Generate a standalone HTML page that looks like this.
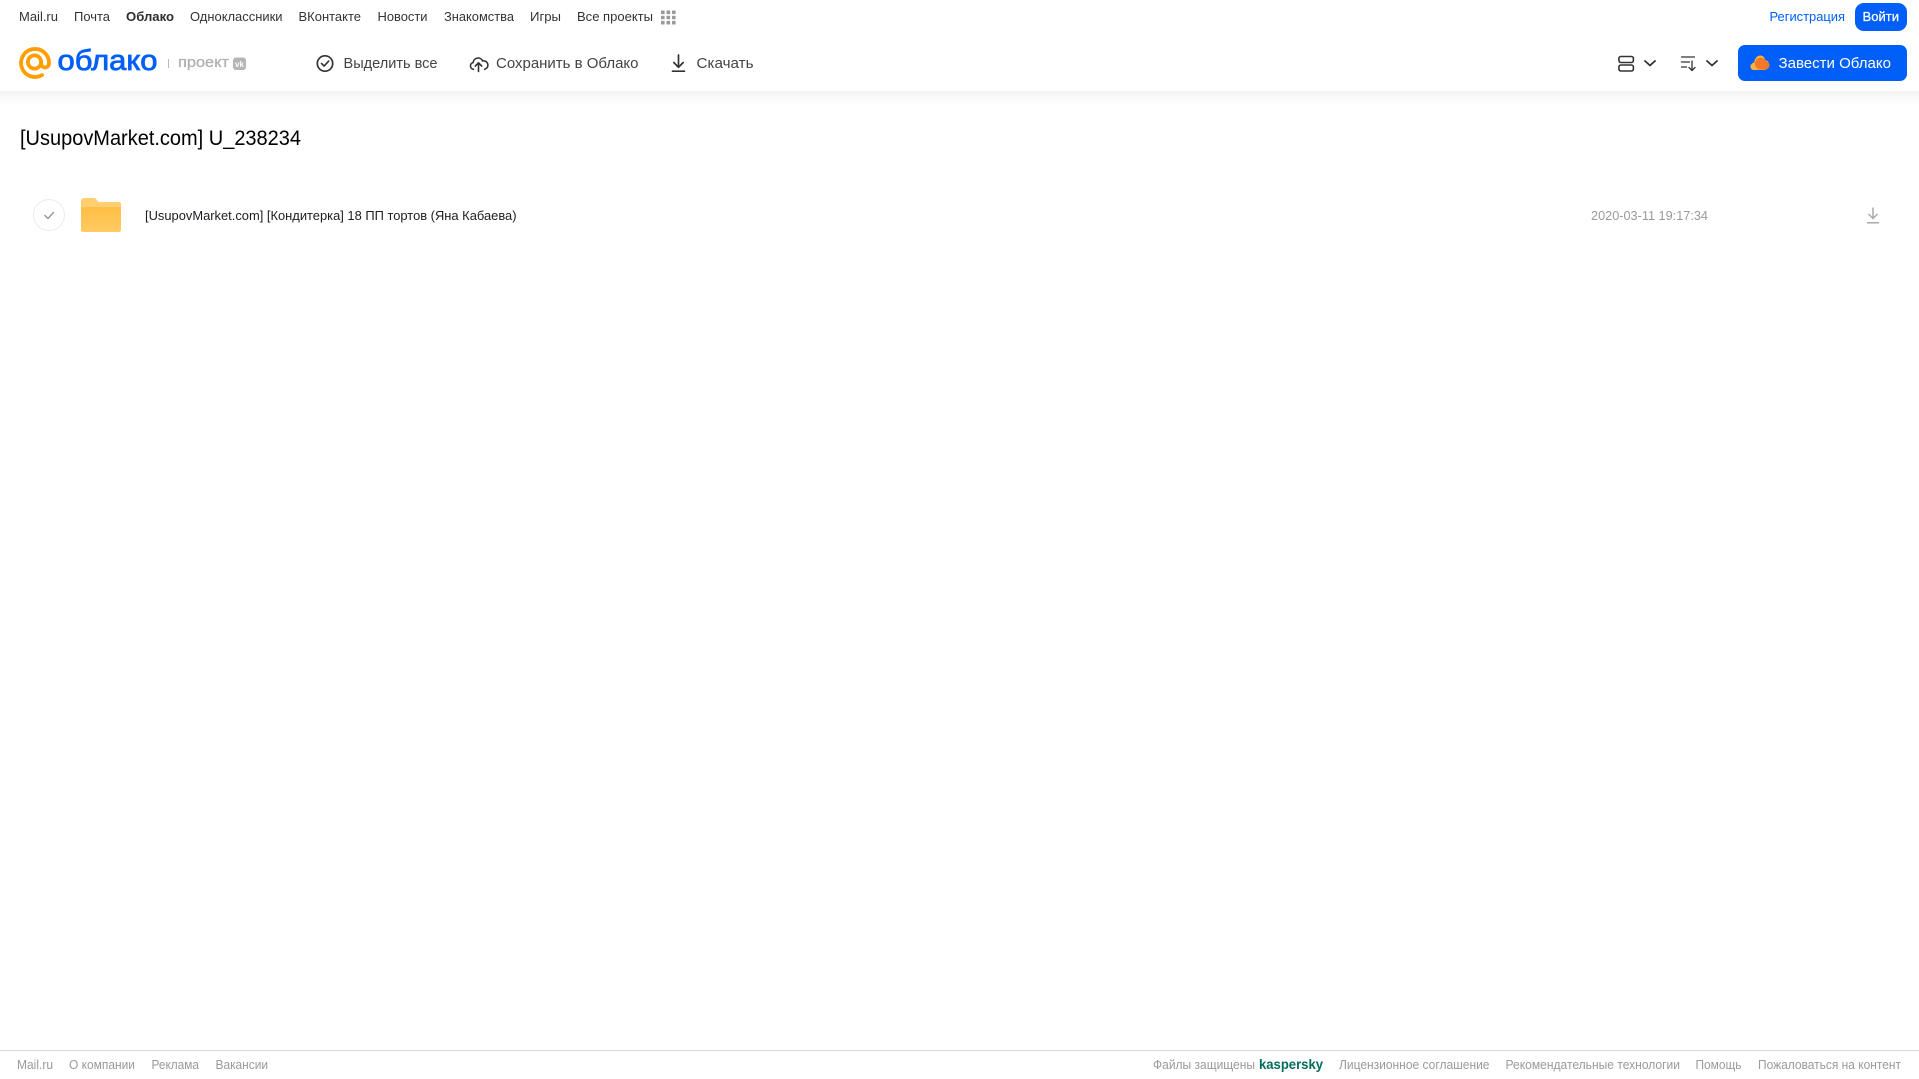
<!DOCTYPE html>
<html lang="ru">
<head>
<meta charset="utf-8">
<title>Облако</title>
<style>
html,body{margin:0;padding:0;background:#fff;width:1919px;height:1079px;overflow:hidden}
svg{display:block}
text{font-family:"Liberation Sans",sans-serif;white-space:pre}
.n{font-size:13px;fill:#333}
.h{font-size:15px;fill:#444}
.f{font-size:12.5px;fill:#9a9a9a}
</style>
</head>
<body>
<svg xmlns="http://www.w3.org/2000/svg" width="1919" height="1079" viewBox="0 0 1919 1079">
<defs>
<linearGradient id="sh" x1="0" y1="0" x2="0" y2="1"><stop offset="0" stop-color="#f4f4f4"/><stop offset="1" stop-color="#fff"/></linearGradient>
<linearGradient id="fo" x1="0" y1="0" x2="0" y2="1"><stop offset="0" stop-color="#ffbe45"/><stop offset="1" stop-color="#ffcb63"/></linearGradient>
</defs>
<rect x="0" y="91" width="1919" height="15" fill="url(#sh)"/>

<!-- top nav -->
<text class="n" x="19" y="21" textLength="39" lengthAdjust="spacingAndGlyphs">Mail.ru</text>
<text class="n" x="74" y="21" textLength="36" lengthAdjust="spacingAndGlyphs">Почта</text>
<text class="n" x="126" y="21" textLength="48" lengthAdjust="spacingAndGlyphs" font-weight="700" style="fill:#2c2d2e">Облако</text>
<text class="n" x="190" y="21" textLength="92.500" lengthAdjust="spacingAndGlyphs">Одноклассники</text>
<text class="n" x="298.500" y="21" textLength="62.500" lengthAdjust="spacingAndGlyphs">ВКонтакте</text>
<text class="n" x="377.500" y="21" textLength="50" lengthAdjust="spacingAndGlyphs">Новости</text>
<text class="n" x="444" y="21" textLength="70" lengthAdjust="spacingAndGlyphs">Знакомства</text>
<text class="n" x="530" y="21" textLength="31" lengthAdjust="spacingAndGlyphs">Игры</text>
<text class="n" x="577" y="21" textLength="76" lengthAdjust="spacingAndGlyphs">Все проекты</text>
<g fill="#999">
<rect x="661" y="10.500" width="3.6" height="3.6" rx=".6"/><rect x="666.5" y="10.500" width="3.6" height="3.6" rx=".6"/><rect x="672" y="10.500" width="3.6" height="3.6" rx=".6"/>
<rect x="661" y="15.700" width="3.6" height="3.6" rx=".6"/><rect x="666.5" y="15.700" width="3.6" height="3.6" rx=".6"/><rect x="672" y="15.700" width="3.6" height="3.6" rx=".6"/>
<rect x="661" y="20.900" width="3.6" height="3.6" rx=".6"/><rect x="666.5" y="20.900" width="3.6" height="3.6" rx=".6"/><rect x="672" y="20.900" width="3.6" height="3.6" rx=".6"/>
</g>
<text class="n" x="1769.500" y="21" textLength="75.500" lengthAdjust="spacingAndGlyphs" style="fill:#005ff9">Регистрация</text>
<rect x="1855" y="3" width="52" height="28" rx="9" fill="#005ff9"/>
<text class="n" x="1862.500" y="21" textLength="36.500" lengthAdjust="spacingAndGlyphs" style="fill:#fff;stroke:#fff;stroke-width:.25">Войти</text>

<!-- logo -->
<g fill="none" stroke="#ff9e00" stroke-width="3.8" stroke-linecap="round">
<path d="M42 75.100A14 14 0 1 1 49 62v1.500a4 4 0 0 1-8 0v-1.500"/>
<circle cx="34.500" cy="62" r="6.6"/>
</g>
<text x="57.500" y="70" font-size="29" fill="#005ff9" stroke="#005ff9" stroke-width=".8" textLength="100" lengthAdjust="spacingAndGlyphs">облако</text>
<rect x="168" y="59" width="1" height="9" fill="#bbb"/>
<text x="178" y="67" font-size="15" fill="#b0b0b0" stroke="#b0b0b0" stroke-width=".3" textLength="51" lengthAdjust="spacingAndGlyphs">проект</text>
<rect x="233" y="57.500" width="13" height="12.500" rx="3" fill="#b5b5b5"/>
<text x="235" y="67" font-size="8" font-weight="700" fill="#fff" textLength="9" lengthAdjust="spacingAndGlyphs">vk</text>

<!-- toolbar -->
<circle cx="325" cy="63.500" r="7.700" fill="none" stroke="#333" stroke-width="1.700"/>
<path d="M321.500 63.500l2.600 2.600 4.600-5" fill="none" stroke="#333" stroke-width="1.600" stroke-linecap="round" stroke-linejoin="round"/>
<text class="h" x="343.500" y="68" textLength="94" lengthAdjust="spacingAndGlyphs">Выделить все</text>

<path d="M473.500 69.300a3.400 3.400 0 0 1-.4-6.700 5 5 0 0 1 9.500-1.700 4.300 4.300 0 0 1 2 8.400" fill="none" stroke="#333" stroke-width="1.600" stroke-linecap="round" stroke-linejoin="round"/>
<path d="M478.500 71.500v-8.500M475.300 66l3.200-3.200 3.200 3.200" fill="none" stroke="#333" stroke-width="1.600" stroke-linecap="round" stroke-linejoin="round"/>
<text class="h" x="496" y="68" textLength="142.500" lengthAdjust="spacingAndGlyphs">Сохранить в Облако</text>

<path d="M678.500 55v12M673.800 62.500l4.700 4.800 4.700-4.800M672.500 71.200h12" fill="none" stroke="#333" stroke-width="1.700" stroke-linecap="round" stroke-linejoin="round"/>
<text class="h" x="696.500" y="68" textLength="57" lengthAdjust="spacingAndGlyphs">Скачать</text>

<!-- view / sort -->
<g fill="none" stroke="#333" stroke-width="1.600">
<rect x="1618.900" y="56.500" width="14.500" height="6" rx="2"/>
<rect x="1618.900" y="65" width="14.500" height="6" rx="2"/>
</g>
<path d="M1645 61l5 4.500 5-4.500M1707 61l5 4.500 5-4.500" fill="none" stroke="#333" stroke-width="1.800" stroke-linecap="round" stroke-linejoin="round"/>
<path d="M1681.500 57h13M1681.500 62h8M1681.500 67h5M1692 61v9.500M1689 67.500l3 3 3-3" fill="none" stroke="#333" stroke-width="1.300" stroke-linecap="round" stroke-linejoin="round"/>

<!-- CTA -->
<rect x="1738" y="45" width="169" height="36" rx="7" fill="#005ff9"/>
<path d="M1754 70a3.500 3.500 0 0 1-2.500-6c.8-1 1.800-1.300 2.700-1.500.5-4 3-7 6-7 2.700 0 4.500 1.800 5 4.500 2.200.5 4 2.300 4 5a5 5 0 0 1-5 5z" fill="#ffb13d"/>
<path d="M1759.500 69.500a6 6 0 0 1-.5-11.500c3.500-.8 6.500 1 6.800 3 2 .7 3.700 2.300 3.700 4.300a4.500 4.500 0 0 1-4.500 4.200z" fill="#f5772a"/>
<text x="1778.500" y="68" font-size="15" fill="#fff" textLength="112.500" lengthAdjust="spacingAndGlyphs">Завести Облако</text>

<!-- title -->
<text x="20" y="145" font-size="21" fill="#000" textLength="281" lengthAdjust="spacingAndGlyphs">[UsupovMarket.com] U_238234</text>

<!-- row -->
<circle cx="49" cy="215" r="15.500" fill="#fff" stroke="#ececec" stroke-width="1"/>
<path d="M45 215.500l3 3 5.500-6" fill="none" stroke="#999" stroke-width="1.500" stroke-linecap="round" stroke-linejoin="round"/>
<path d="M81 201a3 3 0 0 1 3-3h9.500c1.500 0 2.400.6 3.200 1.700l1.600 2.300H119a2 2 0 0 1 2 2V229.500a2.500 2.500 0 0 1-2.500 2.500H83.500a2.500 2.500 0 0 1-2.500-2.500z" fill="#ffcf70"/>
<path d="M81 207h40v22.500a2.500 2.500 0 0 1-2.500 2.500H83.500a2.500 2.500 0 0 1-2.500-2.500z" fill="url(#fo)"/>
<text x="145" y="220" font-size="13" fill="#1f1a22" textLength="371.500" lengthAdjust="spacingAndGlyphs">[UsupovMarket.com] [Кондитерка] 18 ПП тортов (Яна Кабаева)</text>
<text x="1591" y="220" font-size="13" fill="#9a9a9a" textLength="117" lengthAdjust="spacingAndGlyphs">2020-03-11 19:17:34</text>
<path d="M1873 207.500v11M1868.500 214l4.500 4.500 4.500-4.500M1867 222.700h12" fill="none" stroke="#aaa" stroke-width="1.500"/>

<!-- footer -->
<rect x="0" y="1050" width="1919" height="1" fill="#d9d9d9"/>
<text class="f" x="17" y="1069" textLength="36" lengthAdjust="spacingAndGlyphs">Mail.ru</text>
<text class="f" x="69" y="1069" textLength="66" lengthAdjust="spacingAndGlyphs">О компании</text>
<text class="f" x="151.500" y="1069" textLength="47.500" lengthAdjust="spacingAndGlyphs">Реклама</text>
<text class="f" x="215.500" y="1069" textLength="52.500" lengthAdjust="spacingAndGlyphs">Вакансии</text>
<text class="f" x="1153" y="1069" textLength="102" lengthAdjust="spacingAndGlyphs">Файлы защищены</text>
<text x="1259" y="1069" font-size="13.500" font-weight="700" fill="#006d5c" textLength="64" lengthAdjust="spacingAndGlyphs">kaspersky</text>
<text class="f" x="1339" y="1069" textLength="150.500" lengthAdjust="spacingAndGlyphs">Лицензионное соглашение</text>
<text class="f" x="1505.500" y="1069" textLength="174.500" lengthAdjust="spacingAndGlyphs">Рекомендательные технологии</text>
<text class="f" x="1695.500" y="1069" textLength="46" lengthAdjust="spacingAndGlyphs">Помощь</text>
<text class="f" x="1758" y="1069" textLength="143" lengthAdjust="spacingAndGlyphs">Пожаловаться на контент</text>
</svg>
</body>
</html>
